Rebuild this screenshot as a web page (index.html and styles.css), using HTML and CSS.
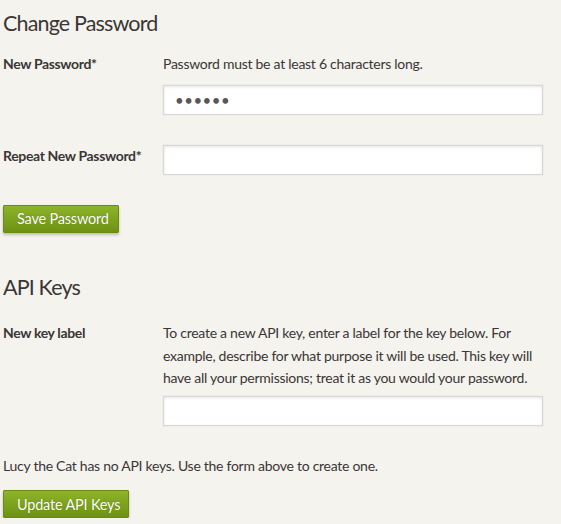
FILE: index.html
```html
<!DOCTYPE html>
<html>
<head>
<meta charset="utf-8">
<link rel="stylesheet" href="styles.css">
</head>
<body>
<main class="page">
  <section class="section section--password">
    <h2 class="section__title">Change Password</h2>
    <div class="field">
      <label class="field__label">New Password*</label>
      <div class="field__body">
        <p class="field__hint field__hint--single">Password must be at least 6 characters long.</p>
        <input class="field__input" type="password" value="secret">
      </div>
    </div>
    <div class="field field--spaced">
      <label class="field__label">Repeat New Password*</label>
      <div class="field__body">
        <input class="field__input" type="password" value="">
      </div>
    </div>
    <button class="btn btn--save" type="button">Save Password</button>
  </section>

  <section class="section section--api">
    <h2 class="section__title section__title--api">API Keys</h2>
    <div class="field">
      <label class="field__label">New key label</label>
      <div class="field__body">
        <p class="field__hint">To create a new API key, enter a label for the key below. For example, describe for what purpose it will be used. This key will have all your permissions; treat it as you would your password.</p>
        <input class="field__input" type="text" value="">
      </div>
    </div>
    <p class="note">Lucy the Cat has no API keys. Use the form above to create one.</p>
    <button class="btn btn--update" type="button">Update API Keys</button>
  </section>
</main>
</body>
</html>
```

FILE: styles.css
```css
html, body {
  margin: 0;
  padding: 0;
  background: #f4f3ee;
}

body {
  font-family: Lato, "Open Sans", sans-serif;
  font-size: 14px;
  line-height: 22.5px;
  letter-spacing: -0.27px;
  color: #3b3636;
}

.page {
  padding: 0 3px;
  width: 540px;
}

.section__title {
  margin: 10px 0 0;
  font-size: 21.5px;
  line-height: 26.4px;
  font-weight: 400;
  letter-spacing: -0.85px;
  color: #3b3636;
}

.section__title--api {
  margin-top: 41px;
}

.section--password .field:first-of-type {
  margin-top: 17px;
}

.section--api .field {
  margin-top: 22px;
}

.field {
  display: grid;
  grid-template-columns: 160px 380px;
}

.field--spaced {
  margin-top: 30px;
}

.field__label {
  font-weight: 700;
  letter-spacing: -0.35px;
}

.field__hint {
  margin: 0 0 6px;
}

.field__hint--single {
  margin-bottom: 9px;
}

.field__input {
  display: block;
  box-sizing: border-box;
  width: 380px;
  height: 30px;
  margin: 0;
  padding: 0 11px;
  border: 1px solid #d9d8d5;
  background: #fff;
  box-shadow: inset 0 1px 3px rgba(0,0,0,0.10), 0 0 0 1px #eeede9;
  font-family: Lato, sans-serif;
  font-size: 15px;
  color: #5a5656;
  letter-spacing: 0.5px;
  outline: none;
}

.note {
  margin: 29px 0 0;
}

.btn {
  display: block;
  box-sizing: border-box;
  height: 28px;
  padding: 0 13px;
  border: 1px solid #6b8b13;
  border-radius: 1px;
  background: linear-gradient(#8db42a, #6d9212);
  box-shadow: 0 2px 3px rgba(0,0,0,0.22);
  font-family: Lato, sans-serif;
  font-size: 14.5px;
  letter-spacing: -0.2px;
  white-space: nowrap;
  color: #fff;
  text-shadow: 0 0 1px rgba(60,70,0,0.6);
  cursor: pointer;
}

.btn--save {
  margin-top: 30px;
  width: 116px;
}

.btn--update {
  margin-top: 13px;
  width: 126px;
}
```
